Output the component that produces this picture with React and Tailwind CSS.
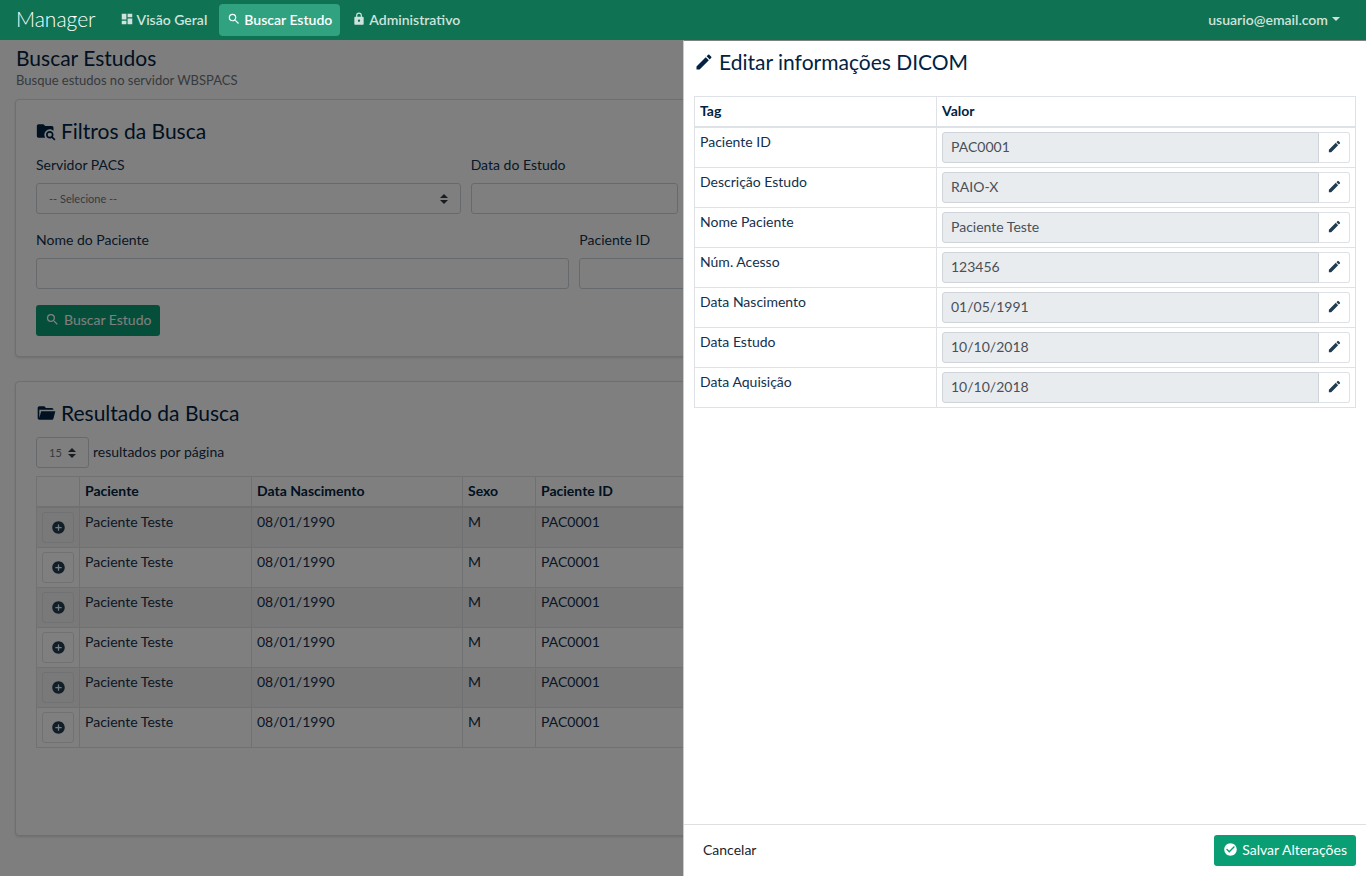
import { useState } from 'react';
import { MdAddCircle, MdCheckCircle, MdDashboard, MdEdit, MdSearch } from 'react-icons/md';

const results = [1, 2, 3, 4, 5, 6].map((id) => ({
  id,
  name: 'Paciente Teste',
  birth: '08/01/1990',
  sex: 'M',
  patientId: 'PAC0001',
}));

const initialTags = [
  { key: 'patientId', label: 'Paciente ID', value: 'PAC0001' },
  { key: 'description', label: 'Descrição Estudo', value: 'RAIO-X' },
  { key: 'name', label: 'Nome Paciente', value: 'Paciente Teste' },
  { key: 'accession', label: 'Núm. Acesso', value: '123456' },
  { key: 'birth', label: 'Data Nascimento', value: '01/05/1991' },
  { key: 'studyDate', label: 'Data Estudo', value: '10/10/2018' },
  { key: 'acquisition', label: 'Data Aquisição', value: '10/10/2018' },
];

const inputClass = 'block h-[31px] w-full rounded-[3px] border border-[#ced4da] bg-white px-2';
const cellClass = 'border border-[#dee2e6] px-[5px] pt-[3px] pb-[5px] align-top';
const controlCellClass = 'border border-[#dee2e6] px-[5px] py-1 align-top';

function FolderSearchIcon() {
  return (
    <svg viewBox="0 0 24 24" className="size-5" fill="currentColor" aria-hidden="true">
      <path d="M16.5,12C19,12 21,14 21,16.5C21,17.38 20.75,18.21 20.31,18.9L23.39,22L22,23.39L18.88,20.32C18.19,20.75 17.37,21 16.5,21C14,21 12,19 12,16.5C12,14 14,12 16.5,12M16.5,14A2.5,2.5 0 0,0 14,16.5A2.5,2.5 0 0,0 16.5,19A2.5,2.5 0 0,0 19,16.5A2.5,2.5 0 0,0 16.5,14M9,4L11,6H19A2,2 0 0,1 21,8V11.81C19.83,10.69 18.25,10 16.5,10A6.5,6.5 0 0,0 10,16.5C10,17.79 10.37,19 11,20H3C1.89,20 1,19.1 1,18V6C1,4.89 1.89,4 3,4H9Z" />
    </svg>
  );
}

function FolderOpenIcon() {
  return (
    <svg viewBox="0 0 24 24" className="size-5" fill="currentColor" aria-hidden="true">
      <path d="M19,20H4C2.89,20 2,19.1 2,18V6C2,4.89 2.89,4 4,4H10L12,6H19A2,2 0 0,1 21,8H21L4,8V18L6.14,10H23.21L20.93,18.5C20.7,19.37 19.92,20 19,20Z" />
    </svg>
  );
}

function LockIcon() {
  return (
    <svg viewBox="0 0 24 24" className="size-[14px]" fill="currentColor" aria-hidden="true">
      <path d="M12,17A2,2 0 0,0 14,15C14,13.89 13.1,13 12,13A2,2 0 0,0 10,15A2,2 0 0,0 12,17M18,8A2,2 0 0,1 20,10V20A2,2 0 0,1 18,22H6A2,2 0 0,1 4,20V10C4,8.89 4.9,8 6,8H7V6A5,5 0 0,1 12,1A5,5 0 0,1 17,6V8H18M12,3A3,3 0 0,0 9,6V8H15V6A3,3 0 0,0 12,3Z" />
    </svg>
  );
}

function Caret() {
  return (
    <svg viewBox="0 0 8 10" className="pointer-events-none absolute top-[11px] right-[13px] h-[10px] w-2" fill="#343a40" aria-hidden="true">
      <path d="M4 0L8 4H0zM4 10L0 6h8z" />
    </svg>
  );
}

function Select({ children, ...props }) {
  return (
    <div className="relative">
      <select
        className="block h-[31px] w-full appearance-none rounded-[3px] border border-[#ced4da] bg-white px-3 text-[11px] text-[#6c757d]"
        {...props}
      >
        {children}
      </select>
      <Caret />
    </div>
  );
}

function Navbar() {
  return (
    <header className="relative z-20 flex h-10 shrink-0 items-center bg-[#0f7253] px-4">
      <a href="#" className="mr-4 pb-[2px] text-[21px] leading-8 font-light text-white">Manager</a>
      <nav className="flex items-center gap-1 font-semibold text-[#cfe3dd]">
        <a href="#" className="flex h-8 items-center gap-[3px] rounded px-2 pb-[2px]">
          <MdDashboard className="size-[14px]" />
          Visão Geral
        </a>
        <a href="#" className="flex h-8 items-center gap-[3px] rounded bg-[#30a27f] px-2 pb-[2px] text-white">
          <MdSearch className="size-[14px]" stroke="currentColor" />
          Buscar Estudo
        </a>
        <a href="#" className="flex h-8 items-center gap-[3px] rounded px-2 pb-[2px]">
          <LockIcon />
          Administrativo
        </a>
      </nav>
      <button type="button" className="mr-[10px] ml-auto flex items-center gap-1 pb-[2px] font-semibold text-[#cfe3dd]">
        usuario@email.com
        <span className="border-x-4 border-t-4 border-x-transparent border-t-current" />
      </button>
    </header>
  );
}

function Filters() {
  return (
    <section className="rounded border border-[#dfdfdf] bg-white px-5 pt-[19px] pb-5 shadow">
      <h2 className="flex items-center gap-[5px] text-[21px] leading-6 text-[#012242]">
        <FolderSearchIcon />
        Filtros da Busca
      </h2>
      <form>
        <div className="mt-[11px] grid grid-cols-12 gap-x-[10px] gap-y-[15px]">
          <div className="col-span-4">
            <label htmlFor="server" className="mb-2 block">Servidor PACS</label>
            <Select id="server">
              <option>-- Selecione --</option>
            </Select>
          </div>
          <div className="col-span-2">
            <label htmlFor="date" className="mb-2 block">Data do Estudo</label>
            <input id="date" className={inputClass} />
          </div>
          <div className="col-span-5 col-start-1">
            <label htmlFor="name" className="mb-2 block">Nome do Paciente</label>
            <input id="name" className={inputClass} />
          </div>
          <div className="col-span-4">
            <label htmlFor="pid" className="mb-2 block">Paciente ID</label>
            <input id="pid" className={inputClass} />
          </div>
        </div>
        <button type="button" className="mt-4 flex h-[31px] items-center gap-1 rounded-[3px] bg-[#0a9e74] px-[9px] pb-[2px] text-white">
          <MdSearch className="size-[15px]" stroke="currentColor" />
          Buscar Estudo
        </button>
      </form>
    </section>
  );
}

function Results() {
  return (
    <section className="mt-6 rounded border border-[#dfdfdf] bg-white px-5 pt-[19px] pb-[87px] shadow">
      <h2 className="flex items-center gap-[5px] text-[21px] leading-6 text-[#012242]">
        <FolderOpenIcon />
        Resultado da Busca
      </h2>
      <div className="mt-3 mb-2 flex items-center gap-1">
        <div className="w-[53px]">
          <Select id="page-size">
            <option>15</option>
          </Select>
        </div>
        <label htmlFor="page-size" className="pb-[3px]">resultados por página</label>
      </div>
      <table className="w-full table-fixed border-collapse">
        <thead>
          <tr className="h-[30px] text-left text-[#012242]">
            <th className={`${cellClass} w-[43px] border-b-2`} />
            <th className={`${cellClass} w-[172px] border-b-2`}>Paciente</th>
            <th className={`${cellClass} w-[211px] border-b-2`}>Data Nascimento</th>
            <th className={`${cellClass} w-[73px] border-b-2`}>Sexo</th>
            <th className={`${cellClass} border-b-2`}>Paciente ID</th>
          </tr>
        </thead>
        <tbody>
          {results.map((row) => (
            <tr key={row.id} className="odd:bg-[#f2f2f2]">
              <td className={controlCellClass}>
                <button type="button" aria-label="Expandir" className="flex h-[31px] w-8 items-center justify-center rounded-[3px] border border-[#dee2e6] pb-px text-[#1f3c50]">
                  <MdAddCircle className="size-[15px]" />
                </button>
              </td>
              <td className={cellClass}>{row.name}</td>
              <td className={cellClass}>{row.birth}</td>
              <td className={cellClass}>{row.sex}</td>
              <td className={cellClass}>{row.patientId}</td>
            </tr>
          ))}
        </tbody>
      </table>
    </section>
  );
}

function EditDrawer() {
  const [tags, setTags] = useState(initialTags);
  const [editing, setEditing] = useState(null);

  const update = (key, value) => {
    setTags(tags.map((tag) => (tag.key === key ? { ...tag, value } : tag)));
  };

  return (
    <aside className="fixed top-10 right-0 bottom-0 z-10 flex w-1/2 flex-col border-t border-l border-t-[#808080] border-l-[#cccccc] bg-white">
      <div className="grow overflow-auto px-[10px] pt-[9px]">
        <h2 className="mb-[22px] flex items-center gap-[5px] text-[21px] leading-6 text-[#012242]">
          <MdEdit className="size-5" />
          Editar informações DICOM
        </h2>
        <table className="w-full table-fixed border-collapse">
          <thead>
            <tr className="h-[30px] text-left text-[#012242]">
              <th className={`${cellClass} w-[242px] border-b-2`}>Tag</th>
              <th className={`${cellClass} border-b-2`}>Valor</th>
            </tr>
          </thead>
          <tbody>
            {tags.map((tag) => (
              <tr key={tag.key}>
                <td className={cellClass}>
                  <label htmlFor={`tag-${tag.key}`}>{tag.label}</label>
                </td>
                <td className={controlCellClass}>
                  <div className="flex h-[31px]">
                    <input
                      id={`tag-${tag.key}`}
                      value={tag.value}
                      readOnly={editing !== tag.key}
                      onChange={(e) => update(tag.key, e.target.value)}
                      className="min-w-0 grow rounded-l-[3px] border border-[#ced4da] bg-[#e9ecef] px-2 pb-[2px] text-[#495057] read-write:bg-white"
                    />
                    <button
                      type="button"
                      aria-label={`Editar ${tag.label}`}
                      onClick={() => setEditing(tag.key)}
                      className="flex w-[31px] items-center justify-center rounded-r-[3px] border border-l-0 border-[#dee2e6] pb-[2px] text-[#1f3c50]"
                    >
                      <MdEdit className="size-[15px]" />
                    </button>
                  </div>
                </td>
              </tr>
            ))}
          </tbody>
        </table>
      </div>
      <footer className="flex items-center justify-between border-t border-[#dfdfdf] p-[10px]">
        <button type="button" className="h-[31px] px-[9px] pb-[2px] text-[#212529]">Cancelar</button>
        <button type="button" className="flex h-[31px] items-center gap-1 rounded-[3px] bg-[#0a9e74] px-[9px] pb-[2px] text-white">
          <MdCheckCircle className="size-[15px]" />
          Salvar Alterações
        </button>
      </footer>
    </aside>
  );
}

export default function App() {
  return (
    <div className="flex h-screen flex-col overflow-hidden bg-[#fdfdfd] font-['Lato',sans-serif] text-[14px] leading-[21px] text-[#12304d]">
      <Navbar />
      <main className="px-[15px] pt-[6px]">
        <h1 className="px-px text-[21px] leading-6 text-[#012242]">Buscar Estudos</h1>
        <p className="mb-[9px] px-px text-[13px] leading-5 text-[#6c757d]">Busque estudos no servidor WBSPACS</p>
        <Filters />
        <Results />
      </main>
      <div className="fixed inset-x-0 top-10 bottom-0 bg-black/50" />
      <EditDrawer />
    </div>
  );
}
